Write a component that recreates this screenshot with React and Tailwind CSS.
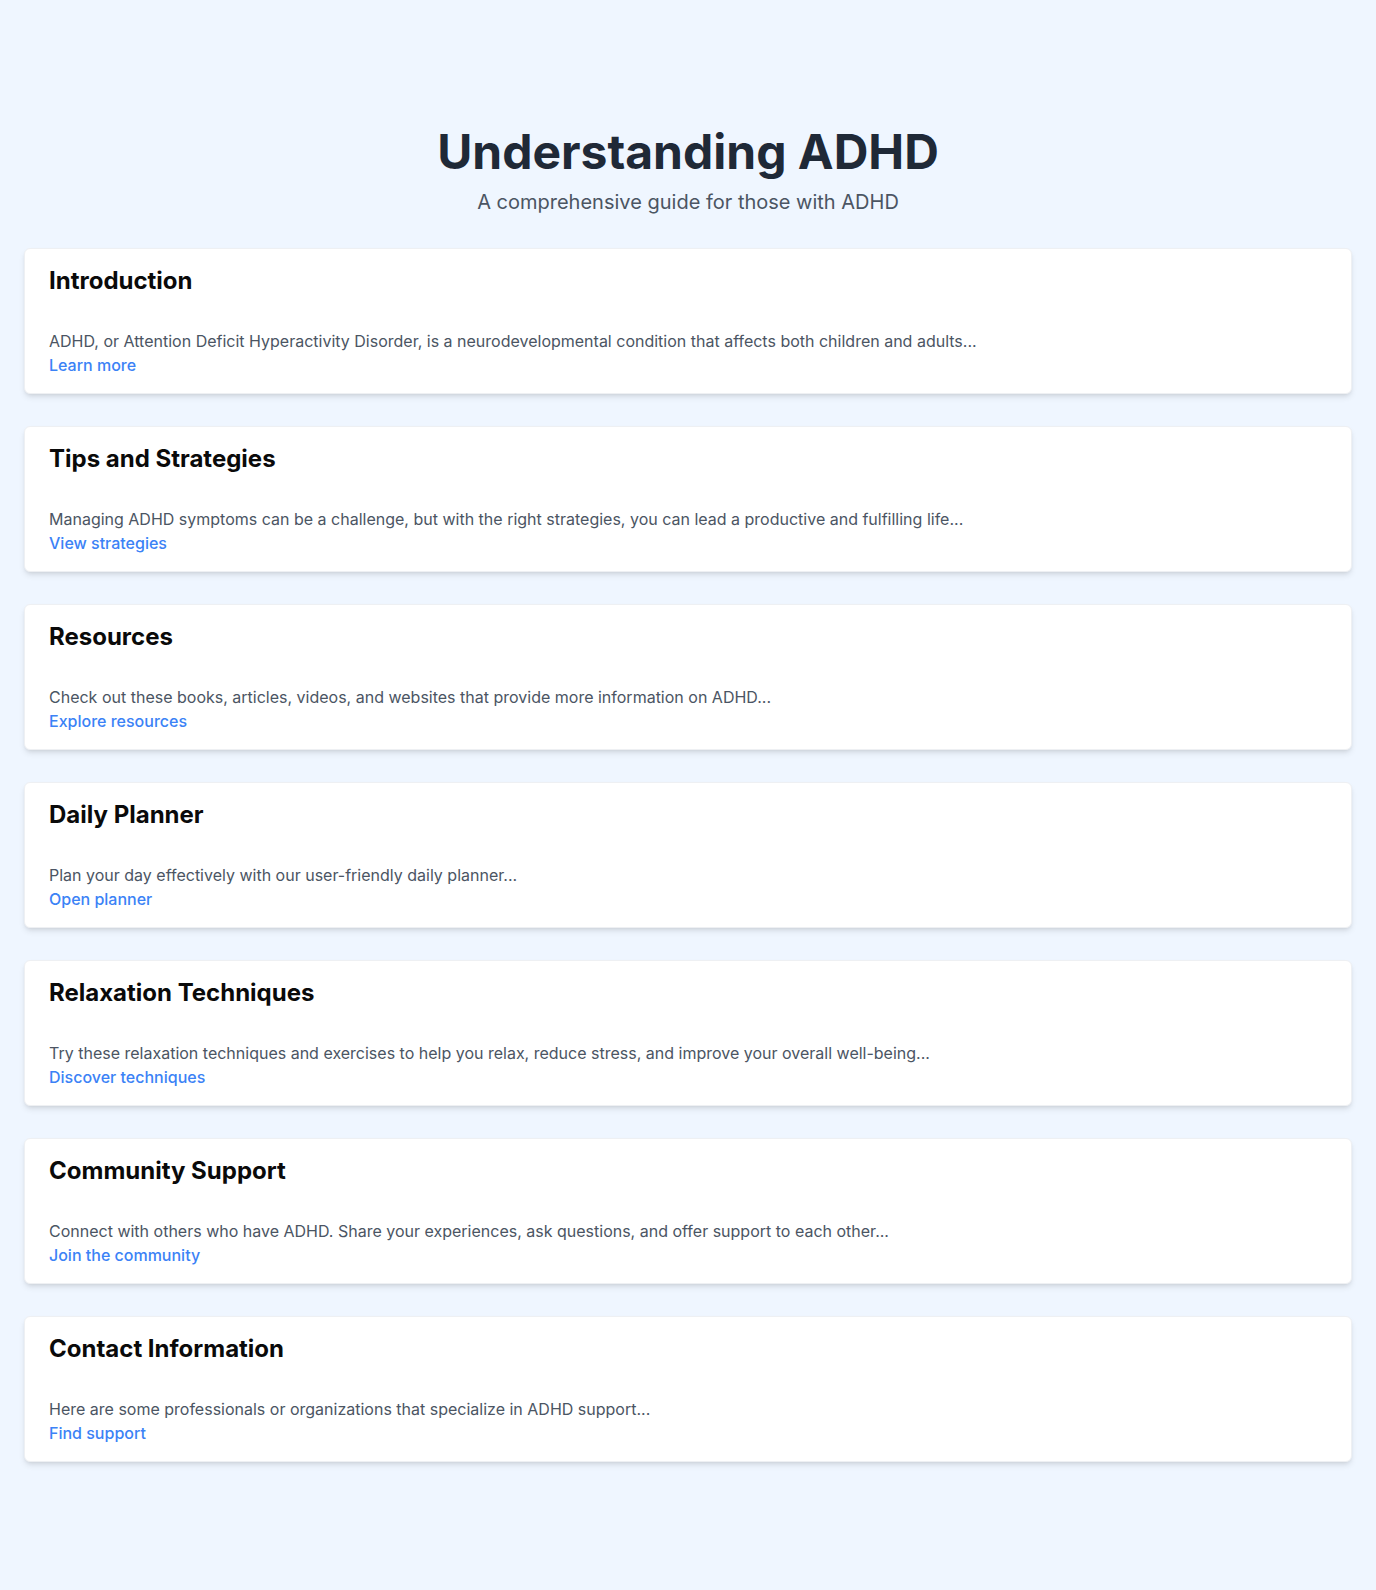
import React from "react";

const sections = [
  {
    title: "Introduction",
    text: "ADHD, or Attention Deficit Hyperactivity Disorder, is a neurodevelopmental condition that affects both children and adults...",
    link: "Learn more",
  },
  {
    title: "Tips and Strategies",
    text: "Managing ADHD symptoms can be a challenge, but with the right strategies, you can lead a productive and fulfilling life...",
    link: "View strategies",
  },
  {
    title: "Resources",
    text: "Check out these books, articles, videos, and websites that provide more information on ADHD...",
    link: "Explore resources",
  },
  {
    title: "Daily Planner",
    text: "Plan your day effectively with our user-friendly daily planner...",
    link: "Open planner",
  },
  {
    title: "Relaxation Techniques",
    text: "Try these relaxation techniques and exercises to help you relax, reduce stress, and improve your overall well-being...",
    link: "Discover techniques",
  },
  {
    title: "Community Support",
    text: "Connect with others who have ADHD. Share your experiences, ask questions, and offer support to each other...",
    link: "Join the community",
  },
  {
    title: "Contact Information",
    text: "Here are some professionals or organizations that specialize in ADHD support...",
    link: "Find support",
  },
];

export default function App() {
  return (
    <div
      className="min-h-[1590px] bg-[#eff6ff] px-6 pt-32 pb-24"
      style={{ fontFamily: "Inter, 'Noto Sans', sans-serif" }}
    >
      <header className="text-center mb-8">
        <h1 className="text-5xl leading-none font-bold text-[#1f2937] mb-3">
          Understanding ADHD
        </h1>
        <p className="text-xl leading-7 text-[#4b5563]">
          A comprehensive guide for those with ADHD
        </p>
      </header>
      <div className="flex flex-col gap-8">
        {sections.map((s) => (
          <section
            key={s.title}
            className="bg-white rounded-md border border-[#eef0f3] shadow-md px-6 pt-4 pb-4"
          >
            <h2 className="text-2xl leading-8 font-bold text-[#0a0a0a] mb-8">
              {s.title}
            </h2>
            <p className="text-base leading-6 text-[#4b5563]">{s.text}</p>
            <a href="#" className="block text-base leading-6 font-medium text-[#3b82f6]">
              {s.link}
            </a>
          </section>
        ))}
      </div>
    </div>
  );
}
